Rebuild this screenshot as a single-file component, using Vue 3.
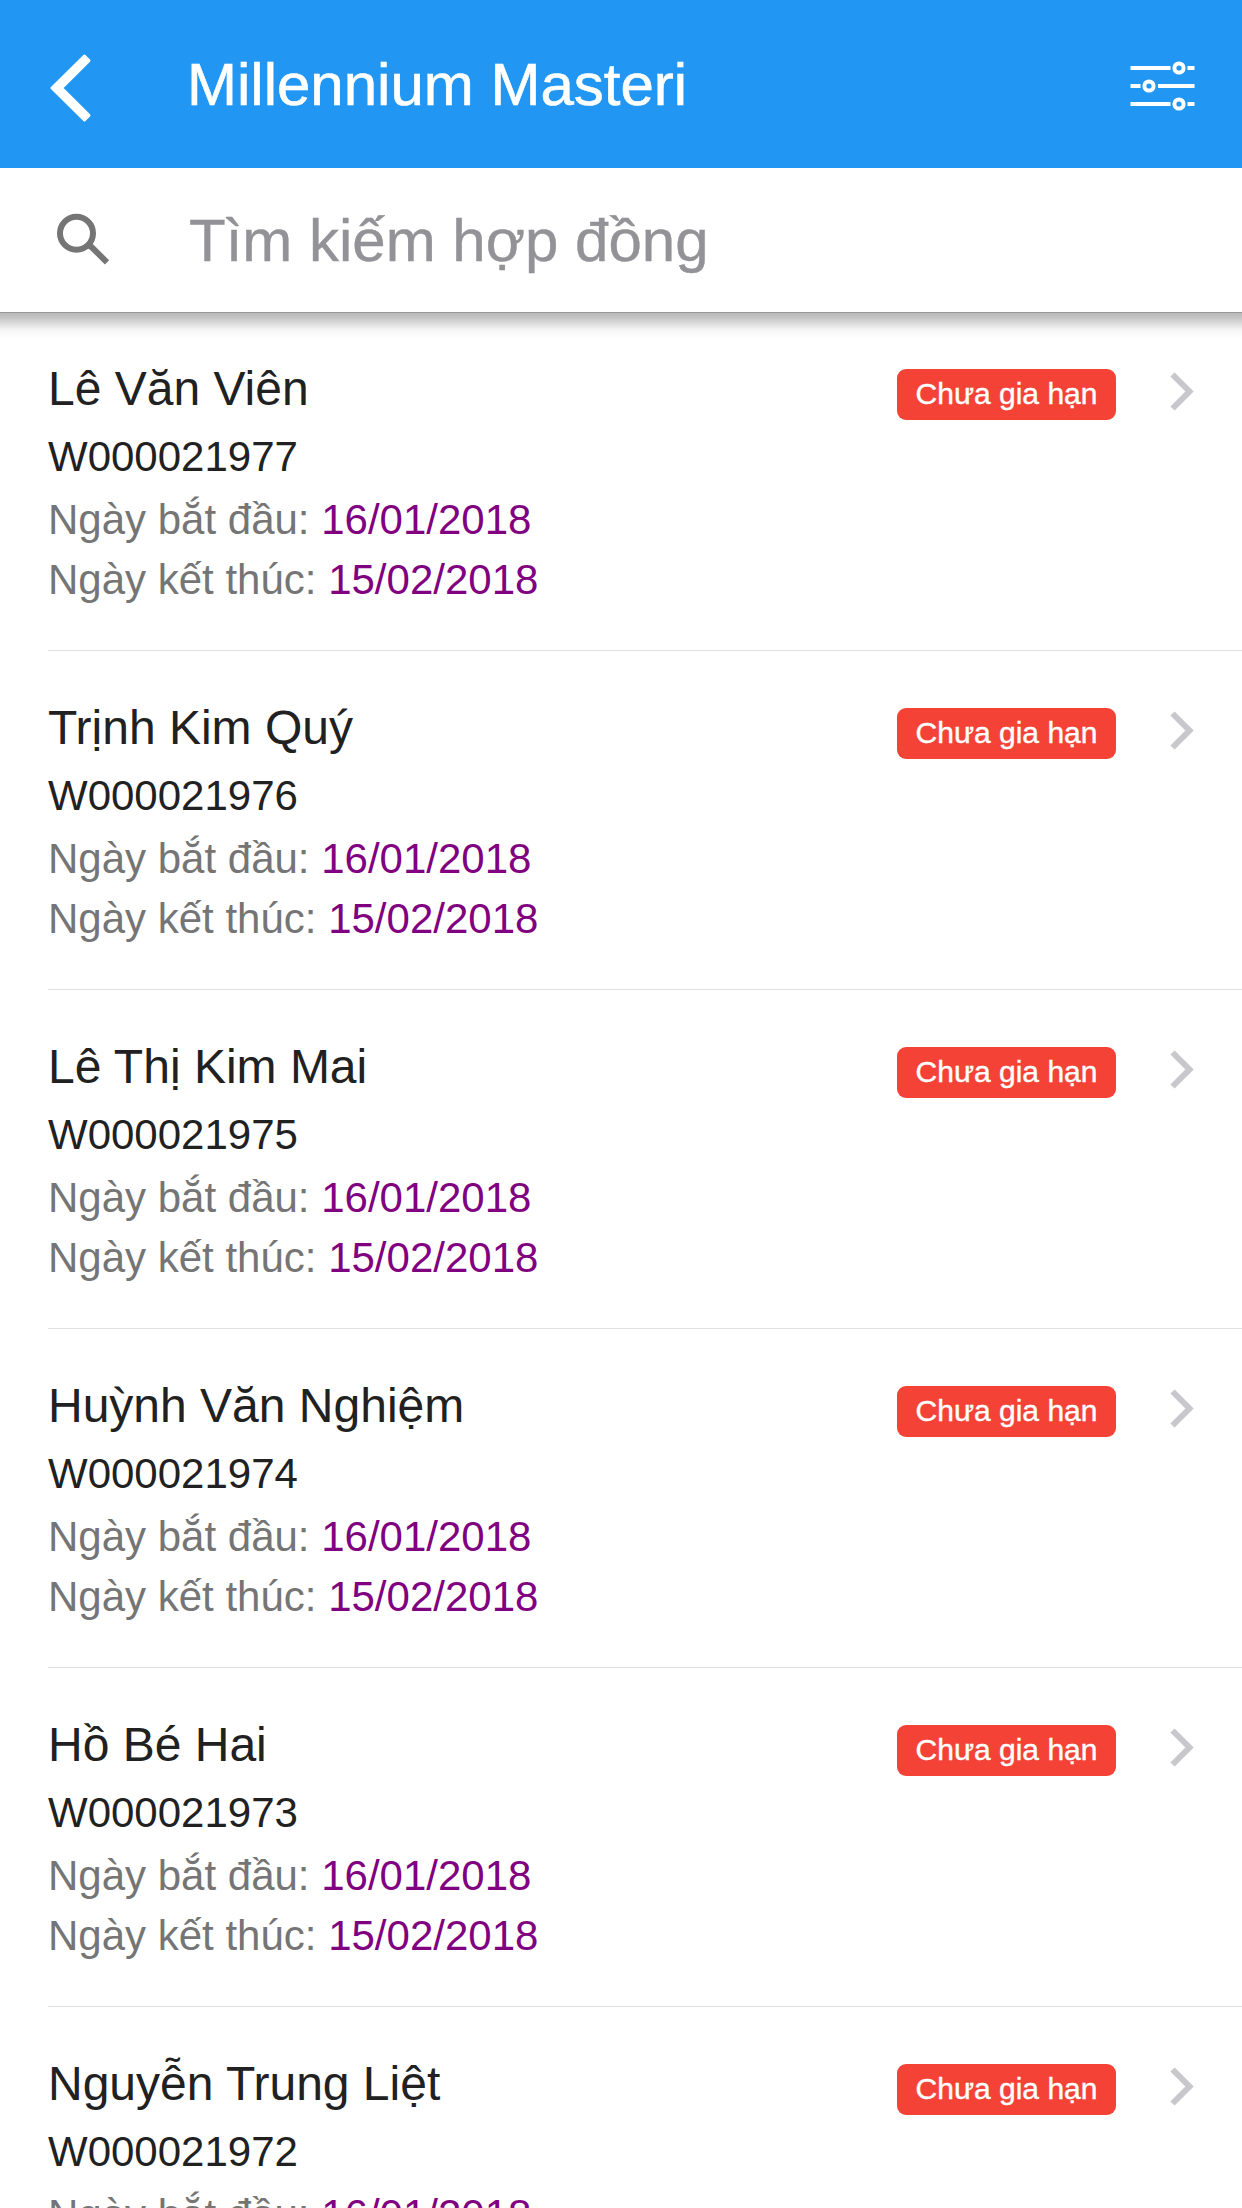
<script setup>
const contracts = [
  { name: 'Lê Văn Viên', code: 'W000021977' },
  { name: 'Trịnh Kim Quý', code: 'W000021976' },
  { name: 'Lê Thị Kim Mai', code: 'W000021975' },
  { name: 'Huỳnh Văn Nghiệm', code: 'W000021974' },
  { name: 'Hồ Bé Hai', code: 'W000021973' },
  { name: 'Nguyễn Trung Liệt', code: 'W000021972' },
].map((c) => ({ ...c, start: '16/01/2018', end: '15/02/2018', status: 'Chưa gia hạn' }))
</script>

<template>
  <div class="screen">
    <header class="bar">
      <svg class="back" width="44" height="70" viewBox="0 0 44 70">
        <path
          d="M4 35 36.400 3 41 7.600 13.600 35 41 62.400 36.400 67Z"
          fill="#fff"
          stroke="#fff"
          stroke-width="3"
          stroke-linejoin="round"
        />
      </svg>
      <h1 class="title">Millennium Masteri</h1>
      <svg class="filter" width="66" height="52" viewBox="0 0 66 52" fill="none" stroke="#fff" stroke-width="4">
        <path d="M1.500 8H41.500M58.500 8H65.500M1.500 26H11.500M29 26H65.500M1.500 44H41.500M58.500 44H65.500" />
        <circle cx="50" cy="8" r="4.600" />
        <circle cx="20" cy="26" r="4.600" />
        <circle cx="50" cy="44" r="4.600" />
      </svg>
    </header>

    <div class="search">
      <svg class="glass" width="56" height="56" viewBox="0 0 56 56" fill="none" stroke="#757575">
        <circle cx="22.500" cy="20.300" r="16.500" stroke-width="6" />
        <path d="M34 32.200 37.500 34 53 49.300" stroke-width="6" />
      </svg>
      <span class="placeholder">Tìm kiếm hợp đồng</span>
    </div>

    <main class="list">
      <article v-for="c in contracts" :key="c.code" class="row">
        <div class="info">
          <h2 class="name">{{ c.name }}</h2>
          <p class="code">{{ c.code }}</p>
          <p class="date">Ngày bắt đầu: <span>{{ c.start }}</span></p>
          <p class="date">Ngày kết thúc: <span>{{ c.end }}</span></p>
        </div>
        <span class="badge">{{ c.status }}</span>
        <svg class="chevron" width="26" height="40" viewBox="0 0 26 40" fill="none" stroke="#c7c7cc" stroke-width="6">
          <path d="M3.500 2.500 20.500 19.500 3.500 36.500" />
        </svg>
      </article>
    </main>
  </div>
</template>

<style>
body {
  margin: 0;
  overflow: hidden;
}
</style>

<style scoped>
.screen {
  display: flex;
  flex-direction: column;
  width: 1242px;
  height: 2208px;
  overflow: hidden;
  background: #fff;
  color: #212121;
  font-family: "Liberation Sans", Arial, sans-serif;
}
h1,
h2,
p {
  margin: 0;
  font-weight: 400;
}
.bar {
  display: flex;
  flex: none;
  align-items: center;
  box-sizing: border-box;
  height: 168px;
  padding: 0 47px 0 48px;
  background: #2196f3;
  color: #fff;
}
.back {
  margin: 7px 95px 0 0;
}
.title {
  flex: 1;
  margin-top: 2px;
  font-size: 60px;
  line-height: 72px;
  -webkit-text-stroke: 0.6px #fff;
}
.filter {
  margin-top: 4px;
}
.search {
  display: flex;
  flex: none;
  align-items: center;
  box-sizing: border-box;
  position: relative;
  height: 144px;
  padding-left: 54px;
  background: #fff;
}
.glass {
  margin-top: 2px;
}
.search::after {
  content: "";
  position: absolute;
  top: 100%;
  left: 0;
  right: 0;
  height: 26px;
  background: linear-gradient(#999 0 1px, #b9b9b9 1px, #c6c6c6 6px, #dedede 12px, #f5f5f5 18px, #fff);
}
.placeholder {
  margin: 2px 0 0 79px;
  color: #929297;
  font-size: 60px;
  line-height: 72px;
  -webkit-text-stroke: 0.4px #929297;
}
.row {
  display: flex;
  flex: none;
  align-items: flex-start;
  box-sizing: border-box;
  height: 339px;
  margin-left: 48px;
  padding: 41px 47px 0 0;
  border-bottom: 1px solid #e0e0e0;
}
.info {
  flex: 1;
}
.name {
  font-size: 48px;
  line-height: 72px;
}
.code {
  margin-bottom: 1px;
  font-size: 42px;
  line-height: 64px;
}
.date {
  color: #757575;
  font-size: 42px;
  line-height: 60px;
}
.date span {
  color: #800080;
}
.badge {
  box-sizing: border-box;
  width: 219px;
  height: 51px;
  margin-top: 16px;
  border-radius: 9px;
  background: #f44336;
  color: #fff;
  font-size: 30px;
  line-height: 50px;
  text-align: center;
  -webkit-text-stroke: 0.4px #fff;
}
.chevron {
  margin: 19px 0 0 53px;
}
</style>
